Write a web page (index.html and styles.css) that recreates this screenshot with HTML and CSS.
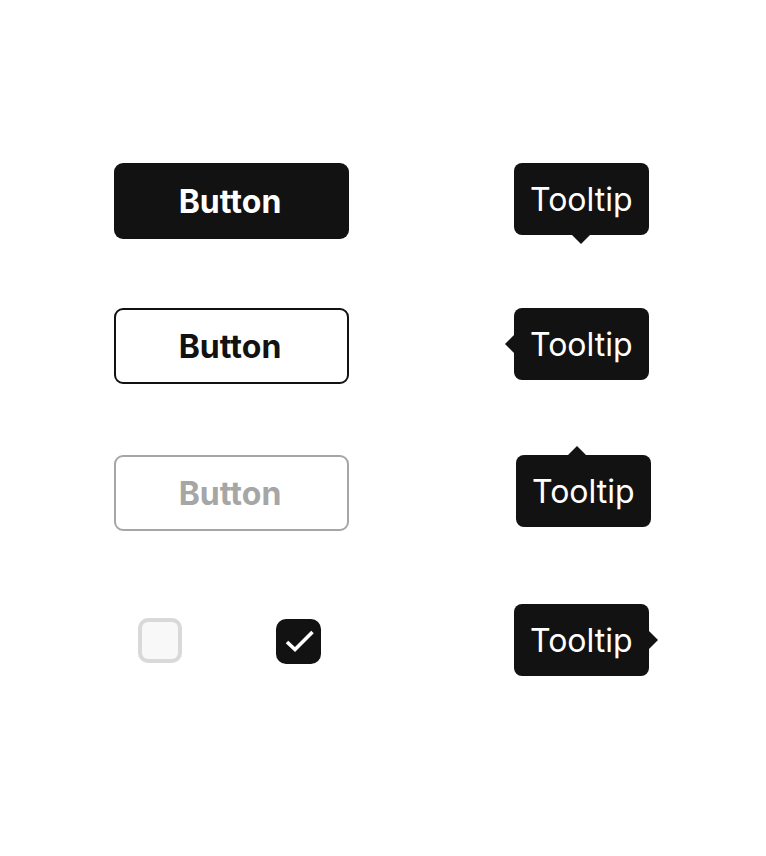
FILE: index.html
```html
<!DOCTYPE html>
<html lang="en">
<head>
<meta charset="utf-8">
<title>Components</title>
<link rel="stylesheet" href="styles.css">
</head>
<body>
<main class="board">
  <button class="btn btn-primary">Button</button>
  <div class="tip tip-bottom">Tooltip</div>

  <button class="btn btn-secondary">Button</button>
  <div class="tip tip-left">Tooltip</div>

  <button class="btn btn-disabled" disabled>Button</button>
  <div class="tip tip-top">Tooltip</div>

  <div class="checks">
    <span class="check check-off"></span>
    <span class="check check-on">
      <svg class="check-icon" width="45" height="45" viewBox="0 0 45 45" aria-hidden="true"><path d="M11 23 L19 30.5 L36.5 13" fill="none" stroke="#fff" stroke-width="3.6" stroke-linecap="butt" stroke-linejoin="miter"/></svg>
    </span>
  </div>
  <div class="tip tip-right">Tooltip</div>
</main>
</body>
</html>
```

FILE: styles.css
```css
* { box-sizing: border-box; }

html, body {
  margin: 0;
  background: #ffffff;
}

body {
  font-family: Inter, "Noto Sans", "Liberation Sans", sans-serif;
  width: 766px;
  height: 856px;
}

.board {
  display: grid;
  grid-template-columns: 235px 137px;
  grid-template-rows: 145px 147px 149px auto;
  column-gap: 165px;
  align-items: start;
  padding: 163px 0 0 114px;
}

.btn {
  width: 235px;
  height: 76px;
  border-radius: 9px;
  font-family: Inter, "Noto Sans", "Liberation Sans", sans-serif;
  font-size: 32px;
  font-weight: 700;
  display: flex;
  align-items: center;
  justify-content: center;
  padding: 0 3px 0 0;
  margin: 0;
}

.btn-primary {
  background: #121212;
  color: #ffffff;
  border: 0;
}

.btn-secondary {
  background: #ffffff;
  color: #121212;
  border: 2px solid #121212;
}

.btn-disabled {
  background: #ffffff;
  color: #a6a6a6;
  border: 2px solid #a6a6a6;
}

.tip {
  position: relative;
  justify-self: start;
  height: 72px;
  padding: 0 16px;
  display: flex;
  align-items: center;
  background: #121212;
  color: #ffffff;
  border-radius: 8px;
  font-size: 32px;
  font-weight: 400;
  white-space: nowrap;
}

.tip::after {
  content: "";
  position: absolute;
  width: 0;
  height: 0;
  border: 9px solid transparent;
}

.tip-bottom::after {
  top: 100%;
  left: 50%;
  margin-left: -9px;
  border-top-color: #121212;
  border-bottom-width: 0;
}

.tip-left::after {
  right: 100%;
  top: 50%;
  margin-top: -9px;
  border-right-color: #121212;
  border-left-width: 0;
}

.tip-top {
  margin-left: 2px;
}

.tip-top::after {
  bottom: 100%;
  left: 52px;
  border-bottom-color: #121212;
  border-top-width: 0;
}

.tip-right::after {
  left: 100%;
  top: 50%;
  margin-top: -9px;
  border-left-color: #121212;
  border-right-width: 0;
}

.checks {
  align-self: center;
  display: flex;
  align-items: center;
  gap: 94px;
  padding-left: 24px;
}

.check {
  width: 44px;
  height: 44px;
  border-radius: 10px;
  display: flex;
  align-items: center;
  justify-content: center;
}

.check-off {
  background: #f8f8f8;
  border: 4px solid #d9d9d9;
  height: 45px;
}

.check-on {
  background: #121212;
  margin-top: 3px;
  width: 45px;
  height: 45px;
}

.check-icon {
  display: block;
}
```
